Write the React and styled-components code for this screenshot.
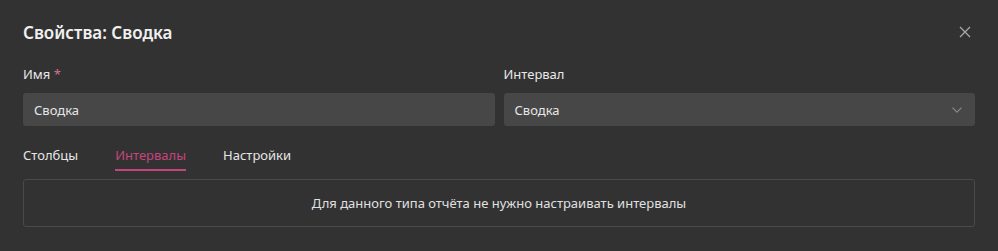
import React, { useState } from 'react';
import styled, { createGlobalStyle } from 'styled-components';

const tabs = ['Столбцы', 'Интервалы', 'Настройки'];

const App = () => {
  const [active, setActive] = useState(1);

  return (
    <>
      <GlobalStyle />
      <Dialog>
        <Header>
          <Title>Свойства: Сводка</Title>
          <CloseButton aria-label="Закрыть">
            <svg width="12" height="12" viewBox="0 0 12 12">
              <path d="M1 1L11 11M11 1L1 11" stroke="#a8a8a8" strokeWidth="1.3" />
            </svg>
          </CloseButton>
        </Header>

        <Fields>
          <Field>
            <Label>
              Имя <Required>*</Required>
            </Label>
            <Input defaultValue="Сводка" />
          </Field>
          <Field>
            <Label>Интервал</Label>
            <Select>
              <span>Сводка</span>
              <svg width="10" height="6" viewBox="0 0 10 6">
                <path d="M0.5 0.7L5 5.2L9.5 0.7" fill="none" stroke="#8a8a8a" strokeWidth="1.1" />
              </svg>
            </Select>
          </Field>
        </Fields>

        <Tabs>
          {tabs.map((t, i) => (
            <Tab key={t} active={i === active} onClick={() => setActive(i)}>
              {t}
            </Tab>
          ))}
        </Tabs>

        <Panel>Для данного типа отчёта не нужно настраивать интервалы</Panel>
      </Dialog>
    </>
  );
};

export default App;

const GlobalStyle = createGlobalStyle`
  body {
    margin: 0;
    padding: 0;
    background: #323232;
    font-family: "Noto Sans", "Open Sans", sans-serif;
    color: #e6e6e6;
  }
`;

const Dialog = styled.div`
  width: 998px;
  height: 251px;
  box-sizing: border-box;
  padding: 20px 23px 0 23px;
  background: #323232;
`;

const Header = styled.div`
  display: flex;
  justify-content: space-between;
  align-items: center;
  height: 24px;
`;

const Title = styled.h1`
  margin: 0;
  font-size: 17px;
  font-weight: 600;
  color: #f0f0f0;
`;

const CloseButton = styled.button`
  background: none;
  border: none;
  padding: 0;
  margin-right: 3px;
  width: 14px;
  height: 14px;
  display: flex;
  align-items: center;
  justify-content: center;
  cursor: pointer;
`;

const Fields = styled.div`
  display: grid;
  grid-template-columns: 1fr 1fr;
  column-gap: 9px;
  margin-top: 21px;
`;

const Field = styled.div`
  display: flex;
  flex-direction: column;
`;

const Label = styled.label`
  font-size: 13px;
  line-height: 18px;
  color: #e8e8e8;
  margin-bottom: 10px;
`;

const Required = styled.span`
  color: #d2748f;
`;

const Input = styled.input`
  height: 33px;
  box-sizing: border-box;
  border: none;
  border-radius: 3px;
  background: #474747;
  color: #e6e6e6;
  font-family: inherit;
  font-size: 13px;
  padding: 0 11px;
  outline: none;
`;

const Select = styled.div`
  height: 33px;
  box-sizing: border-box;
  border-radius: 3px;
  background: #474747;
  font-size: 13px;
  padding: 0 13px 0 11px;
  display: flex;
  align-items: center;
  justify-content: space-between;
  color: #e6e6e6;
`;

const Tabs = styled.div`
  display: flex;
  gap: 37px;
  margin-top: 20px;
`;

const Tab = styled.div`
  font-size: 13px;
  line-height: 18px;
  padding-bottom: 5px;
  color: ${({ active }) => (active ? '#c4457d' : '#e6e6e6')};
  border-bottom: 2px solid ${({ active }) => (active ? '#c4457d' : 'transparent')};
  cursor: pointer;
`;

const Panel = styled.div`
  margin-top: 8px;
  height: 48px;
  box-sizing: border-box;
  border: 1px solid #4a4a4a;
  border-radius: 3px;
  display: flex;
  align-items: center;
  justify-content: center;
  font-size: 13px;
  color: #e0e0e0;
`;
